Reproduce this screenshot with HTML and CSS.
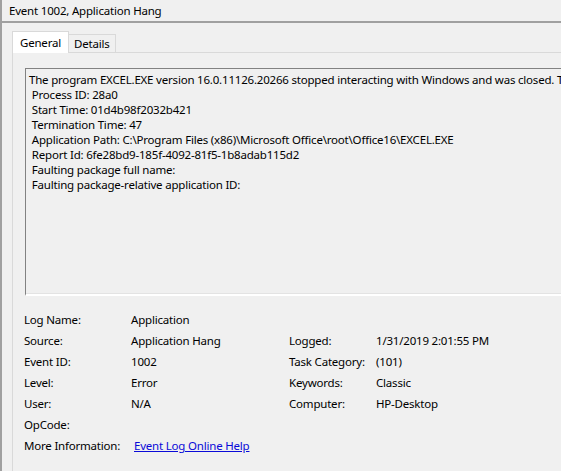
FILE: index.html
```html
<!DOCTYPE html>
<html>
<head>
<meta charset="utf-8">
<link rel="stylesheet" href="styles.css">
</head>
<body>
<div class="window">
  <div class="title">Event 1002, Application Hang</div>
  <div class="tabs">
    <div class="tab active">General</div>
    <div class="tab">Details</div>
  </div>
  <div class="panel">
    <div class="textbox"><div class="line">The program EXCEL.EXE version 16.0.11126.20266 stopped interacting with Windows and was closed. To see if more information about the problem is available, check the problem history in the Security and Maintenance control panel.</div><div class="line"> Process ID: 28a0</div><div class="line"> Start Time: 01d4b98f2032b421</div><div class="line"> Termination Time: 47</div><div class="line"> Application Path: C:\Program Files (x86)\Microsoft Office\root\Office16\EXCEL.EXE</div><div class="line"> Report Id: 6fe28bd9-185f-4092-81f5-1b8adab115d2</div><div class="line"> Faulting package full name: </div><div class="line"> Faulting package-relative application ID: </div></div>
    <div class="details">
      <div class="lbl">Log Name:</div><div class="val">Application</div><div></div><div></div>
      <div class="lbl">Source:</div><div class="val">Application Hang</div><div class="lbl">Logged:</div><div class="val">1/31/2019 2:01:55 PM</div>
      <div class="lbl">Event ID:</div><div class="val">1002</div><div class="lbl">Task Category:</div><div class="val">(101)</div>
      <div class="lbl">Level:</div><div class="val">Error</div><div class="lbl">Keywords:</div><div class="val">Classic</div>
      <div class="lbl">User:</div><div class="val">N/A</div><div class="lbl">Computer:</div><div class="val">HP-Desktop</div>
      <div class="lbl">OpCode:</div><div class="val"></div><div></div><div></div>
      <div class="lbl">More Information:</div><div class="val"><a class="link" href="#">Event Log Online Help</a></div><div></div><div></div>
    </div>
  </div>
</div>
</body>
</html>
```
FILE: styles.css
```css
html, body {
  margin: 0;
  padding: 0;
}
body {
  width: 561px;
  height: 471px;
  overflow: hidden;
  background: #f0f0f0;
  font-family: "Noto Sans", "DejaVu Sans", sans-serif;
  font-size: 11.5px;
  letter-spacing: -0.2px;
  color: #000;
}
.window {
  height: 471px;
  border-left: 2px solid #a0a0a0;
  box-sizing: border-box;
}
.title {
  height: 21px;
  line-height: 21px;
  padding-left: 7px;
  border-bottom: 2px solid #a0a0a0;
  white-space: nowrap;
}
.tabs {
  display: flex;
  align-items: flex-end;
  margin-top: 8px;
  padding-left: 10px;
  position: relative;
  z-index: 1;
}
.tab {
  height: 18px;
  line-height: 18px;
  padding: 0 5px;
  border: 1px solid #d9d9d9;
  border-bottom: none;
  border-left: none;
  background: #f0f0f0;
  box-sizing: border-box;
}
.tab.active {
  height: 22px;
  line-height: 21px;
  padding: 0 7px;
  border-left: 1px solid #d9d9d9;
  background: #ffffff;
  margin-bottom: -1px;
}
.panel {
  margin-left: 10px;
  border-left: 1px solid #d9d9d9;
  border-top: 1px solid #d9d9d9;
  padding: 15px 0 0 12px;
  height: 420px;
  width: 700px;
}
.textbox {
  width: 680px;
  height: 228px;
  box-sizing: border-box;
  border-top: 1px solid #828282;
  border-left: 1px solid #828282;
  border-bottom: 2px solid #ffffff;
  box-shadow: 0 -1px 0 0 #e3e3e3 inset;
  padding: 3px 0 0 3px;
  overflow: hidden;
}
.line {
  white-space: pre;
  line-height: 15px;
  height: 15px;
}
.details {
  display: grid;
  grid-template-columns: 107px 158px 87px 1fr;
  grid-auto-rows: 21px;
  line-height: 21px;
  margin-top: 13px;
  margin-left: -1px;
  white-space: nowrap;
}
.link {
  color: #0a0ad8;
  text-decoration: underline;
  margin-left: 3px;
}
```
